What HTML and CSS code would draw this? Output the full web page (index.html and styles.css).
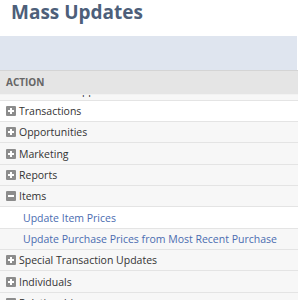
FILE: index.html
```html
<!DOCTYPE html>
<html>
<head>
<meta charset="utf-8">
<link rel="stylesheet" href="styles.css">
</head>
<body>
<h1 class="title">Mass Updates</h1>
<div class="band"></div>
<div class="table">
  <div class="thead">ACTION</div>
  <div class="viewport">
    <ul class="list">
      <li class="row"><span class="ico plus"></span>Customer Support</li>
      <li class="row white"><span class="ico plus"></span>Transactions</li>
      <li class="row"><span class="ico plus"></span>Opportunities</li>
      <li class="row"><span class="ico plus"></span>Marketing</li>
      <li class="row"><span class="ico plus"></span>Reports</li>
      <li class="row"><span class="ico minus"></span>Items</li>
      <li class="row white sub"><a href="#">Update Item Prices</a></li>
      <li class="row sub"><a href="#">Update Purchase Prices from Most Recent Purchase</a></li>
      <li class="row"><span class="ico plus"></span>Special Transaction Updates</li>
      <li class="row"><span class="ico plus"></span>Individuals</li>
      <li class="row"><span class="ico plus"></span>Relationships</li>
    </ul>
  </div>
</div>
</body>
</html>
```
FILE: styles.css
```css
html, body {
  margin: 0;
  padding: 0;
  background: #fff;
  font-family: "Open Sans", "Liberation Sans", sans-serif;
  overflow: hidden;
}
.title {
  margin: 0;
  height: 36px;
  padding-left: 11px;
  font-size: 19px;
  font-weight: 700;
  line-height: 25px;
  color: #4d5f7a;
}
.band {
  height: 34px;
  background: #dfe5ef;
  margin-right: 1px;
}
.table {
  display: flex;
  flex-direction: column;
}
.thead {
  height: 22px;
  padding-bottom: 1px;
  border-top: 1px solid #d4d4d4;
  border-bottom: 1px solid #f2f2f2;
  background: #e5e5e5;
  font-size: 10px;
  font-weight: 700;
  color: #666;
  line-height: 22px;
  padding-left: 6px;
}
.viewport {
  height: 205px;
  overflow: hidden;
}
.list {
  list-style: none;
  margin: -15.6px 0 0;
  padding: 0;
}
.row {
  display: flex;
  align-items: center;
  gap: 3px;
  height: 20.33px;
  border-bottom: 1px solid #e4e4e4;
  background: #f7f7f7;
  padding-left: 6px;
  font-size: 10.5px;
  color: #333;
}
.row.white {
  background: #fff;
}
.row.sub {
  padding-left: 23px;
}
.row a {
  color: #4a6cb0;
  text-decoration: none;
}
.ico {
  width: 10px;
  height: 10px;
  border-radius: 1px;
  background: #8c8c8c;
  position: relative;
  flex: none;
}
.ico::before, .plus::after {
  content: "";
  position: absolute;
  background: #fff;
}
.ico::before {
  left: 2px;
  right: 2px;
  top: 4px;
  height: 2px;
}
.plus::after {
  top: 2px;
  bottom: 2px;
  left: 4px;
  width: 2px;
}
```
